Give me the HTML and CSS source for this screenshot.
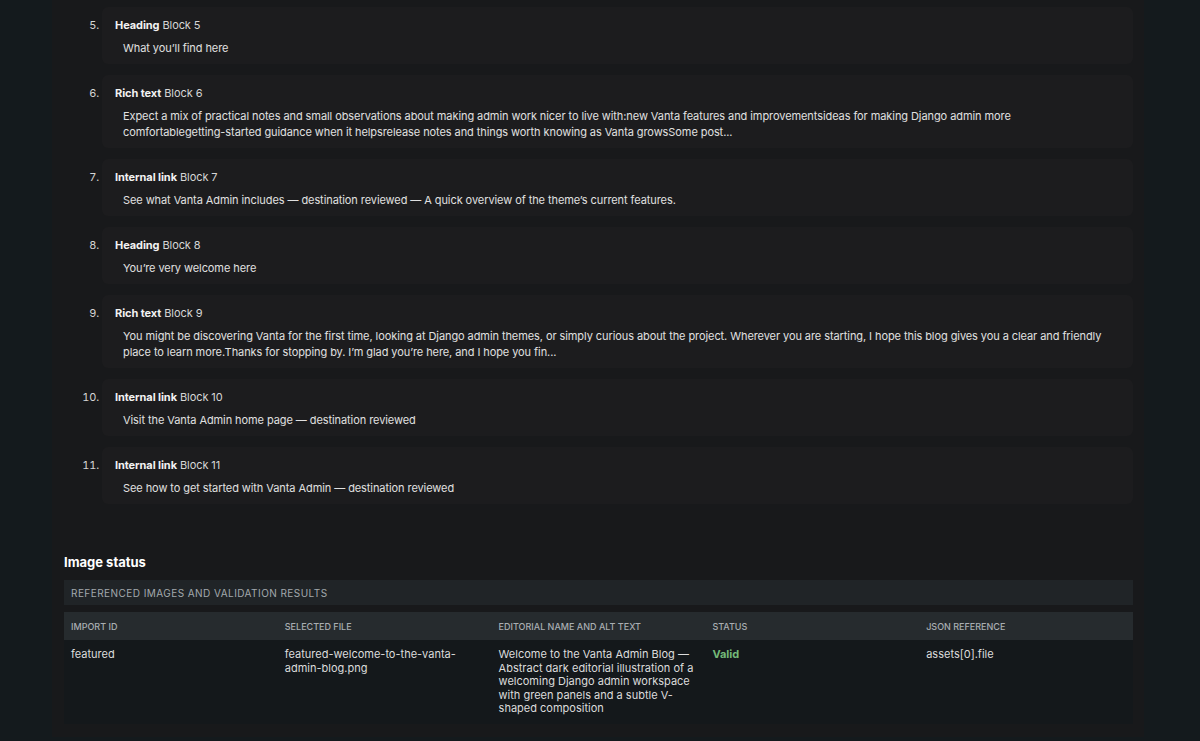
FILE: index.html
```html
<!DOCTYPE html>
<html lang="en">
<head>
<meta charset="utf-8">
<title>Import review</title>
<link rel="stylesheet" href="styles.css">
</head>
<body>
<main class="panel">
  <ol class="blocks" start="5">
    <li class="block"><div class="block-head"><strong>Heading</strong> Block 5</div><p class="block-body">What you’ll find here</p></li>
    <li class="block"><div class="block-head"><strong>Rich text</strong> Block 6</div><p class="block-body">Expect a mix of practical notes and small observations about making admin work nicer to live with:new Vanta features and improvementsideas for making Django admin more comfortablegetting-started guidance when it helpsrelease notes and things worth knowing as Vanta growsSome post...</p></li>
    <li class="block"><div class="block-head"><strong>Internal link</strong> Block 7</div><p class="block-body">See what Vanta Admin includes — destination reviewed — A quick overview of the theme’s current features.</p></li>
    <li class="block"><div class="block-head"><strong>Heading</strong> Block 8</div><p class="block-body">You’re very welcome here</p></li>
    <li class="block"><div class="block-head"><strong>Rich text</strong> Block 9</div><p class="block-body">You might be discovering Vanta for the first time, looking at Django admin themes, or simply curious about the project. Wherever you are starting, I hope this blog gives you a clear and friendly place to learn more.Thanks for stopping by. I’m glad you’re here, and I hope you fin...</p></li>
    <li class="block"><div class="block-head"><strong>Internal link</strong> Block 10</div><p class="block-body">Visit the Vanta Admin home page — destination reviewed</p></li>
    <li class="block"><div class="block-head"><strong>Internal link</strong> Block 11</div><p class="block-body">See how to get started with Vanta Admin — destination reviewed</p></li>
  </ol>

  <h2 class="section-title">Image status</h2>
  <table class="status-table">
    <caption>Referenced images and validation results</caption>
    <thead>
      <tr><th>Import ID</th><th>Selected file</th><th>Editorial name and alt text</th><th>Status</th><th>JSON reference</th></tr>
    </thead>
    <tbody>
      <tr>
        <td>featured</td>
        <td>featured-welcome-to-the-vanta-admin-blog.png</td>
        <td>Welcome to the Vanta Admin Blog — Abstract dark editorial illustration of a welcoming Django admin workspace with green panels and a subtle V-shaped composition</td>
        <td class="valid">Valid</td>
        <td>assets[0].file</td>
      </tr>
    </tbody>
  </table>
</main>
</body>
</html>
```

FILE: styles.css
```css
html, body {
  margin: 0;
  padding: 0;
  background: #141a1d;
  font-family: Inter, "Noto Sans", "Liberation Sans", sans-serif;
  color: #dedede;
}

.panel {
  margin-left: 52px;
  width: 1092px;
  box-sizing: border-box;
  padding: 7px 11px 13px 12px;
  background: #18191b;
}

.blocks {
  list-style: decimal outside;
  margin: 0;
  padding: 0 0 0 38px;
}

.block {
  background: #1c1c1e;
  border-radius: 6px;
  padding: 10px 22px 8px 13px;
  margin-bottom: 11px;
  font-size: 11px;
  line-height: 16px;
  letter-spacing: -0.08px;
}

.block::marker {
  color: #d4d4d4;
  font-size: 11px;
}

.block-head {
  color: #d6d6d6;
}

.block-head strong {
  color: #f2f2f2;
  font-weight: 700;
}

.block-body {
  margin: 7px 0 0 8px;
  color: #e0e0e0;
}

.section-title {
  margin: 49px 0 9px;
  font-size: 13px;
  line-height: 18px;
  font-weight: 700;
  color: #ffffff;
}

.status-table {
  width: 100%;
  border-collapse: collapse;
  table-layout: fixed;
  font-size: 11px;
}

.status-table caption {
  text-align: left;
  background: #202427;
  color: #a3a9ad;
  font-size: 10px;
  letter-spacing: 0.45px;
  text-transform: uppercase;
  padding: 6px 7px 5px;
  line-height: 14px;
  margin-bottom: 7px;
}

.status-table th {
  background: #262b2e;
  color: #a9aeb2;
  font-size: 9px;
  font-weight: 500;
  text-transform: uppercase;
  text-align: left;
  padding: 8px 7px 6px;
  line-height: 14px;
}

.status-table td {
  background: #14181b;
  color: #dcdcdc;
  vertical-align: top;
  padding: 8px 7px 8px;
  line-height: 13.5px;
}

.status-table td.valid {
  color: #73b978;
  font-weight: 700;
}
```
